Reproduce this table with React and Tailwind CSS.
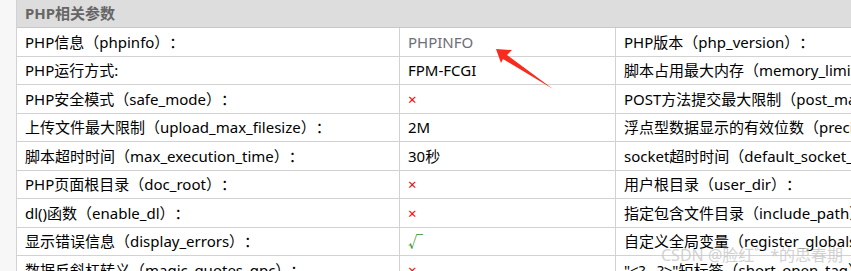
import React from "react";

const rows = [
  ["PHP信息（phpinfo）：", { text: "PHPINFO", tone: "muted" }, "PHP版本（php_version）："],
  ["PHP运行方式:", { text: "FPM-FCGI" }, "脚本占用最大内存（memory_limit）："],
  ["PHP安全模式（safe_mode）：", { text: "×", tone: "no" }, "POST方法提交最大限制（post_max_size）："],
  ["上传文件最大限制（upload_max_filesize）：", { text: "2M" }, "浮点型数据显示的有效位数（precision）："],
  ["脚本超时时间（max_execution_time）：", { text: "30秒" }, "socket超时时间（default_socket_timeout）："],
  ["PHP页面根目录（doc_root）：", { text: "×", tone: "no" }, "用户根目录（user_dir）："],
  ["dl()函数（enable_dl）：", { text: "×", tone: "no" }, "指定包含文件目录（include_path）："],
  ["显示错误信息（display_errors）：", { text: "√", tone: "yes" }, "自定义全局变量（register_globals）："],
  ["数据反斜杠转义（magic_quotes_gpc）：", { text: "×", tone: "no" }, "\"<?...?>\"短标签（short_open_tag）："],
];

const toneClass = {
  muted: "text-[#6e6e78]",
  no: "text-[#ff0000]",
  yes: "text-[#2b8f22]",
};

const Cell = ({ children, className = "" }) => (
  <div
    className={`flex h-[28.5px] items-center overflow-hidden whitespace-nowrap border-b border-r border-[#d2d2d2] pl-[8px] ${className}`}
  >
    {children}
  </div>
);

const App = () => {
  return (
    <div
      className="relative h-[271px] w-[851px] overflow-hidden bg-[#f7f7f7] pl-[16px] text-[15px] text-black [text-spacing-trim:space-all]"
      style={{ fontFamily: '"Noto Sans", "Noto Sans CJK SC", sans-serif' }}
    >
      <div className="w-[1000px] border-l border-[#d2d2d2] bg-white">
        <div className="flex h-[28px] items-center border-b border-[#c8c8c8] bg-[#dddddd] pl-[8px] font-bold text-[#666666]">
          PHP相关参数
        </div>
        <div className="grid grid-cols-[383px_216px_401px]">
          {rows.map(([label, value, right], i) => (
            <React.Fragment key={i}>
              <Cell>{label}</Cell>
              <Cell className={toneClass[value.tone] || ""}>{value.text}</Cell>
              <Cell>{right}</Cell>
            </React.Fragment>
          ))}
        </div>
      </div>

      {/* red arrow pointing at PHPINFO */}
      <svg className="absolute left-0 top-0" width="851" height="271">
        <polygon
          points="496,49 512,50 507,55 553,89 503,59 501,63"
          fill="#fa2a1e"
        />
      </svg>

      {/* watermark */}
      <div className="absolute left-[661px] top-[243px] text-[16px] text-[#c8c8c8] opacity-80">
        CSDN @脸红゛*的思春期
      </div>
    </div>
  );
};

export default App;
